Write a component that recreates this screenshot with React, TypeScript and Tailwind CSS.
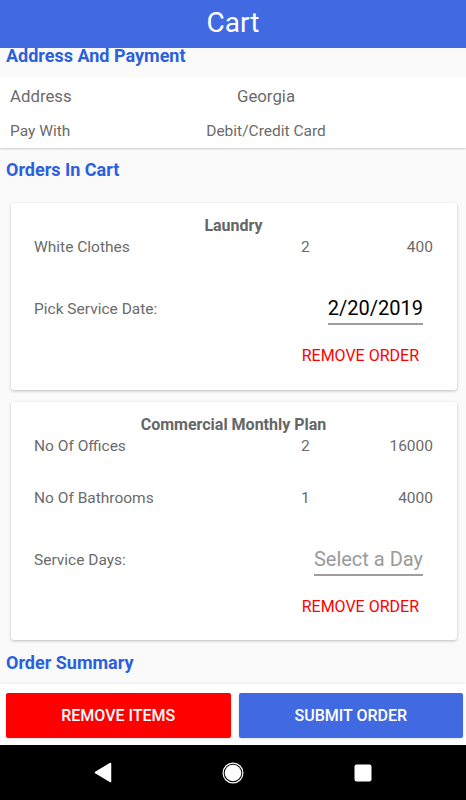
import React from "react";

const font = { fontFamily: "Roboto, 'Noto Sans', sans-serif" };

function Row({ label, qty, price, className = "" }: { label: string; qty: string; price: string; className?: string }) {
  return (
    <div className={`flex items-center text-[15.5px] leading-[20px] text-[#6b6b6b] ${className}`}>
      <span className="flex-1">{label}</span>
      <span className="w-[76px]">{qty}</span>
      <span className="w-[56px] text-right">{price}</span>
    </div>
  );
}

function SectionTitle({ children, className = "" }: { children: React.ReactNode; className?: string }) {
  return <h2 className={`px-[6px] text-[18px] font-bold leading-[24px] text-[#2b5fdf] ${className}`}>{children}</h2>;
}

export default function App() {
  return (
    <div style={font} className="flex h-[800px] w-[466px] flex-col overflow-hidden bg-[#fafafa]">
      <header className="flex h-[48px] shrink-0 items-center justify-center bg-[#4169e1]">
        <h1 className="-mt-[2px] text-[28px] text-white">Cart</h1>
      </header>

      <div className="flex flex-1 flex-col">
        <SectionTitle className="-mt-[4px]">Address And Payment</SectionTitle>

        <div className="mt-[9px] bg-white pb-[1px] pl-[10px] text-[#6b6b6b] shadow-[0_1px_2px_rgba(0,0,0,0.2)]">
          <div className="flex h-[40px] items-center text-[16.8px]">
            <span className="w-[156px]">Address</span>
            <span className="w-[200px] text-center">Georgia</span>
          </div>
          <div className="flex h-[30px] items-center text-[15.5px]">
            <span className="w-[156px]">Pay With</span>
            <span className="w-[200px] text-center">Debit/Credit Card</span>
          </div>
        </div>

        <SectionTitle className="mt-[10px]">Orders In Cart</SectionTitle>

        <div className="mt-[21px] mr-[9px] ml-[11px] rounded-[3px] bg-white pt-[12px] pr-[24px] pb-[24px] pl-[23px] shadow-[0_1px_3px_rgba(0,0,0,0.25)]">
          <div className="text-center text-[16px] font-bold leading-[22px] text-[#666]">Laundry</div>
          <Row label="White Clothes" qty="2" price="400" />
          <div className="mt-[38px] flex items-center">
            <span className="flex-1 text-[15.5px] text-[#6b6b6b]">Pick Service Date:</span>
            <span className="mr-[10px] border-b-[2px] border-[#9e9e9e] pb-[2px] text-[20px] leading-[26px] text-black">2/20/2019</span>
          </div>
          <div className="mt-[21px] flex justify-end pr-[14px] text-[16px] leading-[20px] text-[#ff0000]">REMOVE ORDER</div>
        </div>

        <div className="mt-[12px] mr-[9px] ml-[11px] rounded-[3px] bg-white pt-[12px] pr-[24px] pb-[23px] pl-[23px] shadow-[0_1px_3px_rgba(0,0,0,0.25)]">
          <div className="text-center text-[16px] font-bold leading-[22px] text-[#666]">Commercial Monthly Plan</div>
          <Row label="No Of Offices" qty="2" price="16000" />
          <Row label="No Of Bathrooms" qty="1" price="4000" className="mt-[32px]" />
          <div className="mt-[38px] flex items-center">
            <span className="flex-1 text-[15.5px] text-[#6b6b6b]">Service Days:</span>
            <span className="mr-[10px] border-b-[2px] border-[#9e9e9e] pb-[2px] text-[20px] leading-[26px] text-[#9a9a9a]">Select a Day</span>
          </div>
          <div className="mt-[21px] flex justify-end pr-[14px] text-[16px] leading-[20px] text-[#ff0000]">REMOVE ORDER</div>
        </div>

        <SectionTitle className="mt-[11px]">Order Summary</SectionTitle>

        <div className="mt-auto flex gap-[8px] bg-white pt-[9px] pr-[3px] pb-[7px] pl-[6px] shadow-[0_-1px_2px_rgba(0,0,0,0.05)]">
          <button className="h-[45px] flex-1 rounded-[2px] bg-[#ff0000] text-[16px] font-medium text-white shadow">REMOVE ITEMS</button>
          <button className="h-[45px] flex-1 rounded-[2px] bg-[#4169e1] text-[16px] font-medium text-white shadow">SUBMIT ORDER</button>
        </div>
      </div>

      <nav className="flex h-[55px] shrink-0 items-center justify-center bg-black">
        <div className="flex w-[130px] justify-center">
          <svg width="18" height="21" viewBox="0 0 18 21">
            <path d="M16.5 1.5 L1.5 10.5 L16.5 19.5 Z" fill="white" stroke="white" strokeLinejoin="round" strokeWidth="1.5" />
          </svg>
        </div>
        <div className="flex w-[130px] justify-center">
          <svg width="22" height="22" viewBox="0 0 22 22">
            <circle cx="11" cy="11" r="10.5" fill="white" />
            <circle cx="11" cy="11" r="9.3" fill="black" />
            <circle cx="11" cy="11" r="8.3" fill="white" />
          </svg>
        </div>
        <div className="flex w-[130px] justify-center">
          <svg width="18" height="18" viewBox="0 0 18 18">
            <rect x="0.5" y="0.5" width="17" height="17" rx="2" fill="white" />
          </svg>
        </div>
      </nav>
    </div>
  );
}
